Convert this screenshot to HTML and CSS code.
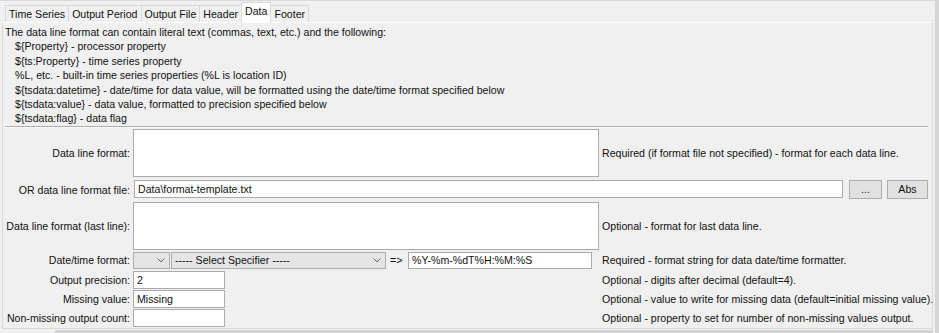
FILE: index.html
```html
<!DOCTYPE html>
<html>
<head>
<meta charset="utf-8">
<link rel="stylesheet" href="styles.css">
</head>
<body>
<div class="window">
  <div class="tabs">
    <div class="tab">Time Series</div>
    <div class="tab">Output Period</div>
    <div class="tab">Output File</div>
    <div class="tab">Header</div>
    <div class="tab active">Data</div>
    <div class="tab">Footer</div>
  </div>
  <div class="panel">
    <div class="help">
      <div>The data line format can contain literal text (commas, text, etc.) and the following:</div>
      <div class="ind">${Property} - processor property</div>
      <div class="ind">${ts:Property} - time series property</div>
      <div class="ind">%L, etc. - built-in time series properties (%L is location ID)</div>
      <div class="ind">${tsdata:datetime} - date/time for data value, will be formatted using the date/time format specified below</div>
      <div class="ind">${tsdata:value} - data value, formatted to precision specified below</div>
      <div class="ind">${tsdata:flag} - data flag</div>
    </div>
    <div class="sep"></div>
    <div class="form">
      <div class="row r-first">
        <div class="lbl">Data line format:</div>
        <div class="textarea"></div>
        <div class="note">Required (if format file not specified) - format for each data line.</div>
      </div>
      <div class="row r-file">
        <div class="lbl">OR data line format file:</div>
        <div class="filefield">
          <div class="input wide">Data\format-template.txt</div>
          <div class="btn dots">...</div>
          <div class="btn abs">Abs</div>
        </div>
      </div>
      <div class="row r-last">
        <div class="lbl">Data line format (last line):</div>
        <div class="textarea"></div>
        <div class="note">Optional - format for last data line.</div>
      </div>
      <div class="row r-date">
        <div class="lbl">Date/time format:</div>
        <div class="datefield">
          <div class="select small"><span class="seltext"></span><svg class="chev" width="8" height="5" viewBox="0 0 8 5"><polyline points="0.5,0.5 4,4 7.5,0.5" fill="none" stroke="#6d6d6d" stroke-width="1"/></svg></div>
          <div class="select big"><span class="seltext">----- Select Specifier -----</span><svg class="chev" width="8" height="5" viewBox="0 0 8 5"><polyline points="0.5,0.5 4,4 7.5,0.5" fill="none" stroke="#6d6d6d" stroke-width="1"/></svg></div>
          <div class="arrow">=&gt;</div>
          <div class="input fmt">%Y-%m-%dT%H:%M:%S</div>
        </div>
        <div class="note">Required - format string for data date/time formatter.</div>
      </div>
      <div class="row r-prec">
        <div class="lbl">Output precision:</div>
        <div><div class="input short">2</div></div>
        <div class="note">Optional - digits after decimal (default=4).</div>
      </div>
      <div class="row r-tight">
        <div class="lbl">Missing value:</div>
        <div><div class="input short">Missing</div></div>
        <div class="note">Optional - value to write for missing data (default=initial missing value).</div>
      </div>
      <div class="row r-tight">
        <div class="lbl">Non-missing output count:</div>
        <div><div class="input short"></div></div>
        <div class="note">Optional - property to set for number of non-missing values output.</div>
      </div>
    </div>
  </div>
  <div class="hscroll"></div>
</div>
</body>
</html>
```
FILE: styles.css
```css
html, body {
  margin: 0;
  padding: 0;
  background: #f0f0f0;
}
body {
  font-family: "Liberation Sans", Arial, sans-serif;
  font-size: 10.6px;
  color: #111;
}
.window {
  width: 939px;
  height: 333px;
  box-sizing: border-box;
  border-top: 1px solid #d9d9d9;
  border-right: 4px solid #d4d4d4;
  padding: 0 2px 0 2px;
  display: flex;
  flex-direction: column;
  overflow: hidden;
}
.tabs {
  display: flex;
  align-items: flex-end;
  height: 21px;
  padding-left: 3px;
  position: relative;
  z-index: 2;
}
.tab {
  height: 17px;
  box-sizing: border-box;
  border: 1px solid #d9d9d9;
  border-bottom: none;
  padding: 0 3px;
  line-height: 16px;
  margin-right: -1px;
  white-space: nowrap;
  background: #f0f0f0;
}
.tab.active {
  height: 21px;
  margin-bottom: -1px;
  background: #ffffff;
  line-height: 17px;
  padding-bottom: 3px;
  position: relative;
  z-index: 3;
}
.panel {
  border: 1px solid #d9d9d9;
  border-top-color: #ffffff;
  padding: 0 4px 1px 2px;
  position: relative;
  z-index: 1;
}
.help {
  padding-top: 2px;
  line-height: 14.4px;
}
.help .ind {
  padding-left: 10px;
}
.sep {
  height: 1px;
  background: #a0a0a0;
  border-bottom: 1px solid #ffffff;
  margin-top: 0;
  opacity: 0.8;
}
.form {
  display: flex;
  flex-direction: column;
  padding-top: 1px;
}
.row {
  display: grid;
  grid-template-columns: 125px 466px 1fr;
  column-gap: 3px;
  align-items: center;
}
.r-file { margin-top: 3px; }
.r-last { margin-top: 2px; }
.r-date { margin-top: 2px; }
.r-prec { margin-top: 2px; }
.r-tight { margin-top: 1px; }
.lbl {
  text-align: right;
  white-space: nowrap;
}
.note {
  white-space: nowrap;
}
.textarea {
  height: 48px;
  box-sizing: border-box;
  border: 1px solid #ababab;
  background: #ffffff;
}
.input {
  height: 18px;
  box-sizing: border-box;
  border: 1px solid #ababab;
  background: #ffffff;
  padding: 0 3px;
  line-height: 16px;
  white-space: nowrap;
  overflow: hidden;
}
.input.short { width: 92px; }
.input.fmt { width: 184px; height: 17px; line-height: 15px; }
.filefield {
  grid-column: 2 / 4;
  display: flex;
  align-items: flex-start;
  height: 20px;
}
.input.wide {
  flex: 1;
  margin-left: 1px;
}
.btn {
  height: 19px;
  box-sizing: border-box;
  border: 1px solid #adadad;
  background: #e1e1e1;
  text-align: center;
  line-height: 17px;
}
.btn.dots { width: 33px; margin-left: 6px; }
.btn.abs { width: 41px; margin-left: 5px; }
.datefield {
  grid-column: 2 / 3;
  display: flex;
  align-items: center;
  height: 17px;
}
.select {
  height: 17px;
  box-sizing: border-box;
  border: 1px solid #adadad;
  background: #e5e5e5;
  display: flex;
  align-items: center;
  justify-content: space-between;
  padding: 0 4px 0 3px;
}
.select.small { width: 37px; margin-right: 1px; }
.select.big { width: 215px; }
.chev { display: block; flex: none; }
.arrow {
  margin-left: 4px;
  width: 13px;
  margin-right: 5px;
  white-space: nowrap;
}
.hscroll {
  margin-top: 1px;
  margin-left: 53px;
  height: 3px;
  background: #d6d6d6;
}
```
